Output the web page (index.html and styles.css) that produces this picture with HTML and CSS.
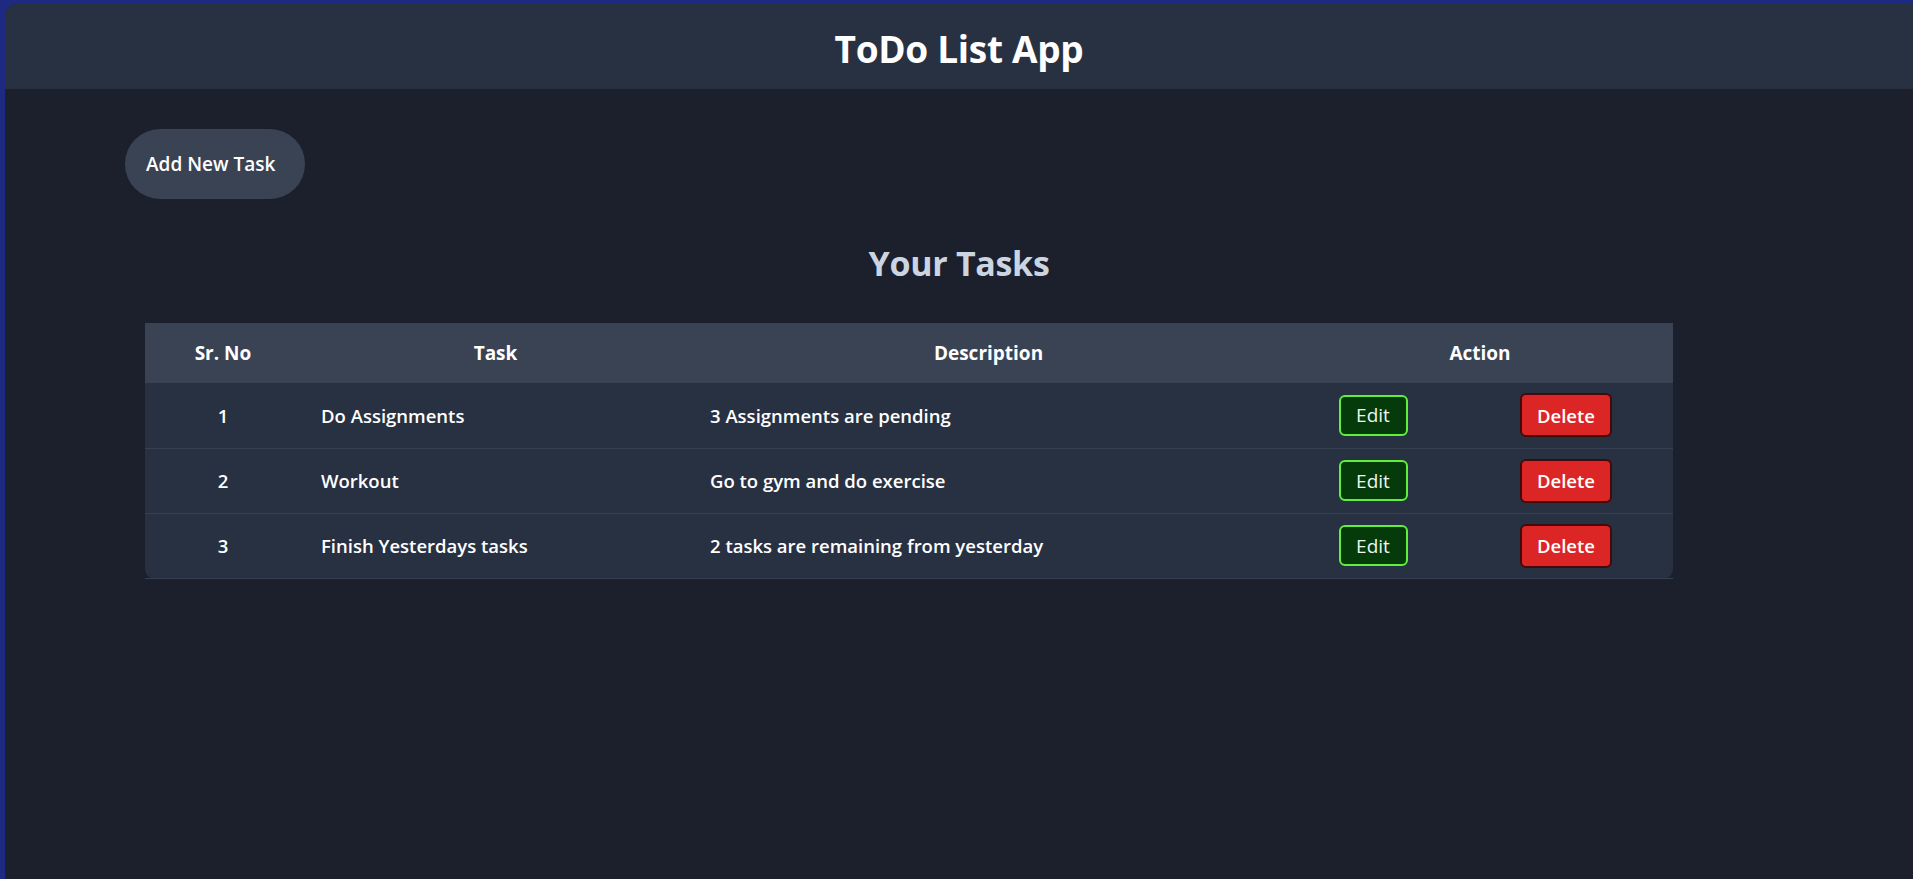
FILE: index.html
```html
<!DOCTYPE html>
<html lang="en">
<head>
<meta charset="utf-8">
<title>ToDo List App</title>
<link rel="stylesheet" href="styles.css">
</head>
<body>
<div class="app">
  <header class="topbar">
    <h1 class="title">ToDo List App</h1>
  </header>
  <main class="content">
    <button class="add-btn" type="button">Add New Task</button>
    <h2 class="section-title">Your Tasks</h2>
    <div class="table-wrap">
      <table class="tasks">
        <colgroup>
          <col class="c-no">
          <col class="c-task">
          <col class="c-desc">
          <col class="c-edit">
          <col class="c-del">
        </colgroup>
        <thead>
          <tr>
            <th>Sr. No</th>
            <th>Task</th>
            <th>Description</th>
            <th colspan="2">Action</th>
          </tr>
        </thead>
        <tbody>
          <tr>
            <td class="num">1</td>
            <td class="txt">Do Assignments</td>
            <td class="txt">3 Assignments are pending</td>
            <td class="act"><button class="edit-btn" type="button">Edit</button></td>
            <td class="act"><button class="del-btn" type="button">Delete</button></td>
          </tr>
          <tr>
            <td class="num">2</td>
            <td class="txt">Workout</td>
            <td class="txt">Go to gym and do exercise</td>
            <td class="act"><button class="edit-btn" type="button">Edit</button></td>
            <td class="act"><button class="del-btn" type="button">Delete</button></td>
          </tr>
          <tr>
            <td class="num">3</td>
            <td class="txt">Finish Yesterdays tasks</td>
            <td class="txt">2 tasks are remaining from yesterday</td>
            <td class="act"><button class="edit-btn" type="button">Edit</button></td>
            <td class="act"><button class="del-btn" type="button">Delete</button></td>
          </tr>
        </tbody>
      </table>
    </div>
  </main>
</div>
</body>
</html>
```

FILE: styles.css
```css
* { box-sizing: border-box; }

html, body {
  margin: 0;
  padding: 0;
  height: 100%;
}

body {
  background: #1e2a82;
  font-family: "Open Sans", "Noto Sans", "DejaVu Sans", sans-serif;
  color: #ffffff;
  padding: 4px 0 0 5px;
  overflow: hidden;
}

.app {
  background: #1b202c;
  border-top-left-radius: 12px;
  min-height: calc(100vh - 4px);
  overflow: hidden;
}

.topbar {
  height: 85px;
  padding-top: 4px;
  background: #283142;
  display: flex;
  align-items: center;
  justify-content: center;
}

.title {
  margin: 0;
  font-size: 37px;
  font-weight: 700;
  line-height: 45px;
  color: #ffffff;
  letter-spacing: -0.3px;
}

.content {
  padding: 40px 0 0 0;
}

.add-btn {
  display: block;
  margin-left: 120px;
  height: 70px;
  width: 180px;
  padding: 0 0 0 21px;
  text-align: left;
  border: none;
  border-radius: 35px;
  background: #3a4354;
  color: #ffffff;
  font-family: inherit;
  font-size: 19px;
  font-weight: 600;
}

.section-title {
  margin: 42px 0 0 0;
  text-align: center;
  font-size: 34px;
  line-height: 45px;
  font-weight: 700;
  color: #cbd5e1;
  letter-spacing: -0.3px;
}

.table-wrap {
  margin: 37px 0 0 140px;
  width: 1528px;
  background: #283142;
  border-radius: 10px;
}

.tasks {
  width: 100%;
  border-collapse: collapse;
  table-layout: fixed;
}

.c-no { width: 156px; }
.c-task { width: 389px; }
.c-desc { width: 597px; }
.c-edit { width: 172px; }
.c-del { width: 214px; }

.tasks thead tr {
  background: #3a4354;
  height: 60px;
}

.tasks th {
  font-size: 19px;
  font-weight: 700;
  text-align: center;
  padding: 0;
}

.tasks tbody tr {
  height: 65px;
  border-bottom: 1px solid #374050;
}

.tasks td {
  font-size: 18.5px;
  font-weight: 600;
  padding: 0;
}

.tasks td.num { text-align: center; }
.tasks td.txt { text-align: left; padding-left: 20px; }
.tasks td.act { text-align: center; }

.edit-btn {
  width: 69px;
  height: 41px;
  border: 2px solid #5ff03e;
  border-radius: 6px;
  background: #053a0b;
  color: #eef6ee;
  font-family: inherit;
  font-size: 19px;
  font-weight: 400;
  padding: 0;
}

.del-btn {
  width: 92px;
  height: 44px;
  border: 2px solid #440909;
  border-radius: 6px;
  background: #dc2626;
  color: #ffffff;
  font-family: inherit;
  font-size: 18.5px;
  font-weight: 600;
  padding: 0;
}
```
